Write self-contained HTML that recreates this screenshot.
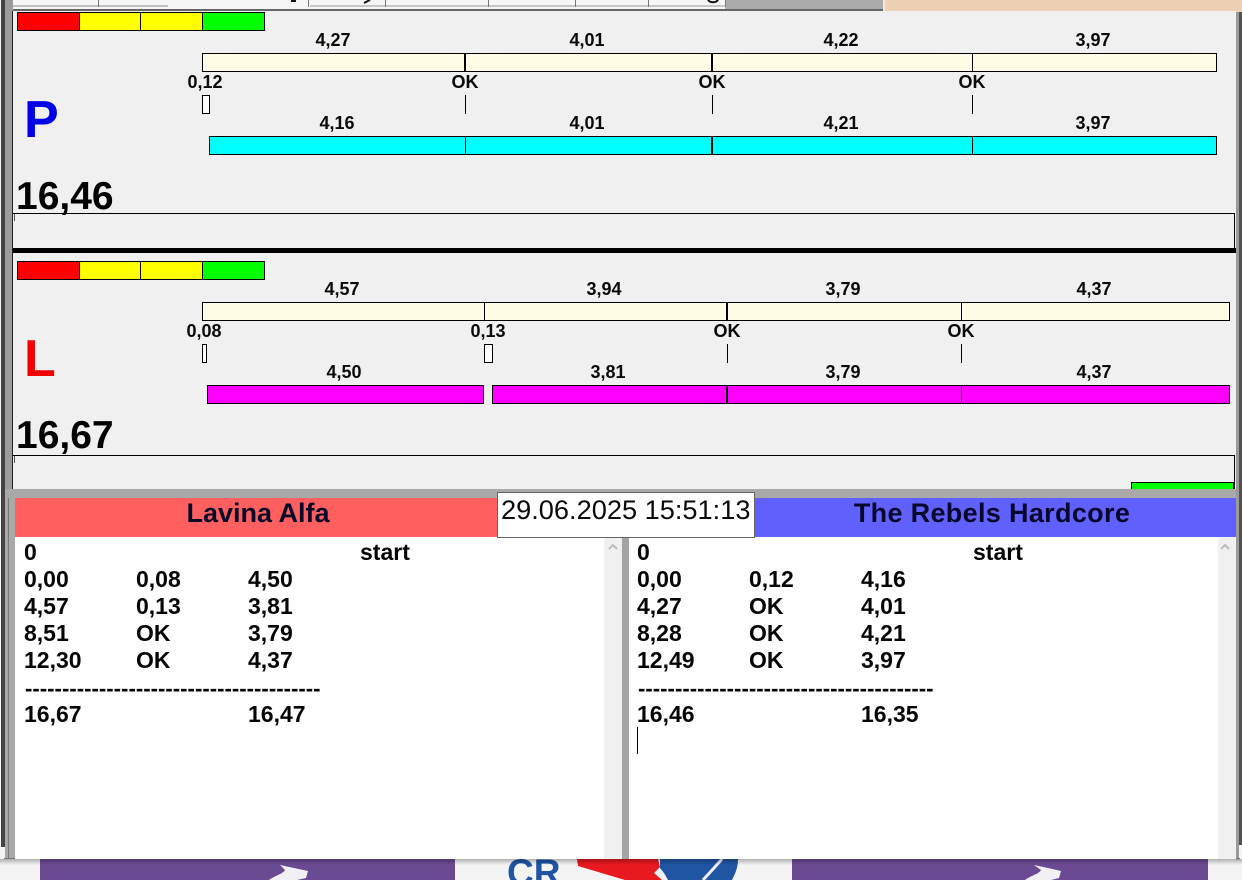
<!DOCTYPE html>
<html><head><meta charset="utf-8"><style>
html,body{margin:0;padding:0;width:1242px;height:880px;overflow:hidden;background:#f4f4f4}
body{position:relative;font-family:"Liberation Sans",sans-serif;color:#000}
div{position:absolute;box-sizing:border-box}
.t{font:bold 18px/20px "Liberation Sans",sans-serif;transform:translateX(-50%);white-space:nowrap;color:#0a0a0a}
.b{border:1px solid #000}
.k{background:#000;width:1px}
.k2{background:#000;width:2px}
.big{font:bold 39px/44px "Liberation Sans",sans-serif;white-space:nowrap;left:16px}
.r{font:bold 23px/26px "Liberation Sans",sans-serif;white-space:nowrap;color:#050505}
.d{font:bold 22.2px/26px "Liberation Sans",sans-serif;white-space:nowrap;color:#050505}
.hd{font:bold 27px/31px "Liberation Sans",sans-serif;text-align:center;top:498px;height:39px;color:#08082a}
</style></head><body>
<!-- backdrop -->
<div style="left:40px;top:859px;width:415px;height:21px;background:#6b4a94"></div>
<div style="left:792px;top:859px;width:416px;height:21px;background:#6b4a94"></div>
<svg style="position:absolute;left:0;top:859px" width="1242" height="21" viewBox="0 859 1242 21">
<path d="M269 880 C276 875 283 874 285 870 L280 865 L294 868 L308 871 L306 878 L297 880Z" fill="#f2f0f4"/>
<path d="M1025 880 C1032 875 1039 874 1041 870 L1034 865 L1048 868 L1061 871 L1059 878 L1051 880Z" fill="#f2f0f4"/>
<path d="M660 859 H738 C738 868 735 874 732 880 H668 L664 873 L660 868Z" fill="#1f55a3"/>
<path d="M577 859 H658 L660 867 L654 873 L662 880 H625 L578 866Z" fill="#e8191f"/>
<path d="M703 880 L714 868 L722 859" stroke="#eef" stroke-width="3" fill="none"/>
<text x="507" y="885" font-family="Liberation Sans" font-weight="bold" font-size="37" fill="#1f55a3">CR</text>
</svg>
<div style="left:0;top:859px;width:1242px;height:6px;background:linear-gradient(rgba(0,0,0,.28),rgba(0,0,0,0))"></div>
<!-- window frame -->
<div style="left:1px;top:0;width:4px;height:847px;background:#444"></div>
<div style="left:5px;top:0;width:8px;height:490px;background:#9c9c9c"></div>
<div style="left:5px;top:489px;width:10px;height:370px;background:#a9a9a9"></div>
<div style="left:8px;top:489px;width:1px;height:370px;background:#777"></div>
<div style="left:1236px;top:11px;width:3px;height:849px;background:#9a9a9a"></div>
<div style="left:1239px;top:11px;width:3px;height:834px;background:#55504c"></div>
<div style="left:4px;top:858px;width:1236px;height:1px;background:#777"></div>
<!-- tabs -->
<div style="left:13px;top:0;width:870px;height:9px;background:#f6f6f6"></div>
<div style="left:725px;top:0;width:158px;height:9px;background:#ababab"></div>
<div style="left:13px;top:5px;width:155px;height:2px;background:#c0c0c0"></div>
<div style="left:310px;top:5px;width:415px;height:2px;background:#c8c8c8"></div>
<div style="left:98px;top:0;width:1px;height:7px;background:#777"></div>
<div style="left:308px;top:0;width:1px;height:7px;background:#777"></div>
<div style="left:385px;top:0;width:1px;height:7px;background:#777"></div>
<div style="left:488px;top:0;width:1px;height:7px;background:#777"></div>
<div style="left:575px;top:0;width:1px;height:7px;background:#777"></div>
<div style="left:648px;top:0;width:1px;height:7px;background:#777"></div>
<div style="left:725px;top:0;width:1px;height:7px;background:#777"></div>
<svg style="position:absolute;left:0;top:0" width="760" height="6"><path d="M291 1 H296 M364 3 L370 0 M708 0 C710 3 716 3 718 0" stroke="#111" stroke-width="2" fill="none"/></svg>
<div style="left:13px;top:9px;width:870px;height:2px;background:#666"></div>
<div style="left:885px;top:0;width:357px;height:12px;background:#eed0b4"></div>
<!-- main panel -->
<div style="left:13px;top:11px;width:1223px;height:478px;background:#f0f0f0"></div>
<div style="left:12px;top:11px;width:1px;height:478px;background:#222"></div>
<div style="left:883px;top:0;width:2px;height:11px;background:#f0e8df"></div>

<!-- P panel -->
<div class="b" style="left:17px;top:12px;width:63px;height:19px;background:#f00"></div>
<div class="b" style="left:79px;top:12px;width:62px;height:19px;background:#ff0"></div>
<div class="b" style="left:140px;top:12px;width:63px;height:19px;background:#ff0"></div>
<div class="b" style="left:202px;top:12px;width:63px;height:19px;background:#0f0"></div>
<div class="t" style="left:333px;top:30px">4,27</div>
<div class="t" style="left:587px;top:30px">4,01</div>
<div class="t" style="left:841px;top:30px">4,22</div>
<div class="t" style="left:1093px;top:30px">3,97</div>
<div class="b" style="left:202px;top:53px;width:1015px;height:19px;background:#fffde6"></div>
<div class="k2" style="left:464px;top:53px;height:19px"></div>
<div class="k2" style="left:711px;top:53px;height:19px"></div>
<div class="k" style="left:972px;top:53px;height:19px"></div>
<div class="t" style="left:205px;top:72px">0,12</div>
<div class="t" style="left:465px;top:72px">OK</div>
<div class="t" style="left:712px;top:72px">OK</div>
<div class="t" style="left:972px;top:72px">OK</div>
<div class="b" style="left:202px;top:95px;width:8px;height:19px;background:#fff"></div>
<div class="k" style="left:465px;top:95px;height:19px"></div>
<div class="k" style="left:712px;top:95px;height:19px"></div>
<div class="k" style="left:972px;top:95px;height:19px"></div>
<div style="left:24px;top:90px;font:bold 52px/60px 'Liberation Sans',sans-serif;color:#0000e6">P</div>
<div class="t" style="left:337px;top:113px">4,16</div>
<div class="t" style="left:587px;top:113px">4,01</div>
<div class="t" style="left:841px;top:113px">4,21</div>
<div class="t" style="left:1093px;top:113px">3,97</div>
<div class="b" style="left:209px;top:136px;width:1008px;height:19px;background:#0ff"></div>
<div class="k" style="left:465px;top:136px;height:19px"></div>
<div class="k2" style="left:711px;top:136px;height:19px"></div>
<div class="k" style="left:972px;top:136px;height:19px"></div>
<div class="big" style="top:175px">16,46</div>
<div style="left:13px;top:213px;width:1222px;height:1px;background:#000"></div>
<div style="left:14px;top:214px;width:1px;height:7px;background:#555"></div>
<div style="left:1234px;top:213px;width:1px;height:36px;background:#000"></div>
<div style="left:13px;top:248px;width:1223px;height:5px;background:#000"></div>

<!-- L panel -->
<div class="b" style="left:17px;top:261px;width:63px;height:19px;background:#f00"></div>
<div class="b" style="left:79px;top:261px;width:62px;height:19px;background:#ff0"></div>
<div class="b" style="left:140px;top:261px;width:63px;height:19px;background:#ff0"></div>
<div class="b" style="left:202px;top:261px;width:63px;height:19px;background:#0f0"></div>
<div class="t" style="left:342px;top:279px">4,57</div>
<div class="t" style="left:604px;top:279px">3,94</div>
<div class="t" style="left:843px;top:279px">3,79</div>
<div class="t" style="left:1094px;top:279px">4,37</div>
<div class="b" style="left:202px;top:302px;width:1028px;height:19px;background:#fffde6"></div>
<div class="k" style="left:484px;top:302px;height:19px"></div>
<div class="k2" style="left:726px;top:302px;height:19px"></div>
<div class="k" style="left:961px;top:302px;height:19px"></div>
<div class="t" style="left:204px;top:321px">0,08</div>
<div class="t" style="left:488px;top:321px">0,13</div>
<div class="t" style="left:727px;top:321px">OK</div>
<div class="t" style="left:961px;top:321px">OK</div>
<div class="b" style="left:202px;top:344px;width:5px;height:19px;background:#fff"></div>
<div class="b" style="left:484px;top:344px;width:9px;height:19px;background:#fff"></div>
<div class="k" style="left:727px;top:344px;height:19px"></div>
<div class="k" style="left:961px;top:344px;height:19px"></div>
<div style="left:24px;top:329px;font:bold 52px/60px 'Liberation Sans',sans-serif;color:#f00000">L</div>
<div class="t" style="left:344px;top:362px">4,50</div>
<div class="t" style="left:608px;top:362px">3,81</div>
<div class="t" style="left:843px;top:362px">3,79</div>
<div class="t" style="left:1094px;top:362px">4,37</div>
<div class="b" style="left:207px;top:385px;width:277px;height:19px;background:#f0f"></div>
<div class="b" style="left:492px;top:385px;width:738px;height:19px;background:#f0f"></div>
<div class="k2" style="left:726px;top:385px;height:19px"></div>
<div class="k" style="left:961px;top:385px;height:19px"></div>
<div class="big" style="top:414px">16,67</div>
<div style="left:13px;top:455px;width:1222px;height:1px;background:#000"></div>
<div style="left:14px;top:456px;width:1px;height:7px;background:#555"></div>
<div style="left:1234px;top:455px;width:1px;height:34px;background:#000"></div>
<div class="b" style="left:1131px;top:482px;width:103px;height:7px;background:#0f0;border-bottom:0"></div>

<!-- splitter -->
<div style="left:5px;top:489px;width:1231px;height:9px;background:#a9a9a9"></div>
<!-- lists -->
<div style="left:15px;top:537px;width:589px;height:322px;background:#fff"></div>
<div style="left:604px;top:537px;width:18px;height:322px;background:#f0f0f0"></div>
<div style="left:622px;top:537px;width:7px;height:322px;background:#a3a3a3"></div>
<div style="left:629px;top:537px;width:589px;height:322px;background:#fff"></div>
<div style="left:1218px;top:537px;width:18px;height:322px;background:#f0f0f0"></div>
<svg style="position:absolute;left:607px;top:542px" width="12" height="10"><path d="M2 7 L6 3 L10 7" stroke="#bcbcbc" stroke-width="2" fill="none"/></svg>
<svg style="position:absolute;left:1219px;top:542px" width="12" height="10"><path d="M2 7 L6 3 L10 7" stroke="#bcbcbc" stroke-width="2" fill="none"/></svg>
<!-- headers -->
<div class="hd" style="left:15px;width:482px;background:#ff5f5f;padding-left:4px">Lavina Alfa</div>
<div class="hd" style="left:755px;width:481px;background:#6060ff;letter-spacing:.33px;padding-right:7px">The Rebels Hardcore</div>
<div style="left:497px;top:492px;width:258px;height:46px;background:#fff;border:1px solid #666;font:27.2px/34px 'Liberation Sans',sans-serif;padding-left:3px;white-space:nowrap;color:#0a0a0a">29.06.2025 15:51:13</div>

<!-- left list -->
<div class="r" style="left:24px;top:539px">0</div><div class="r" style="left:360px;top:539px">start</div>
<div class="r" style="left:24px;top:566px">0,00</div><div class="r" style="left:136px;top:566px">0,08</div><div class="r" style="left:248px;top:566px">4,50</div>
<div class="r" style="left:24px;top:593px">4,57</div><div class="r" style="left:136px;top:593px">0,13</div><div class="r" style="left:248px;top:593px">3,81</div>
<div class="r" style="left:24px;top:620px">8,51</div><div class="r" style="left:136px;top:620px">OK</div><div class="r" style="left:248px;top:620px">3,79</div>
<div class="r" style="left:24px;top:647px">12,30</div><div class="r" style="left:136px;top:647px">OK</div><div class="r" style="left:248px;top:647px">4,37</div>
<div class="d" style="left:25px;top:676px">----------------------------------------</div>
<div class="r" style="left:24px;top:701px">16,67</div><div class="r" style="left:248px;top:701px">16,47</div>
<!-- right list -->
<div class="r" style="left:637px;top:539px">0</div><div class="r" style="left:973px;top:539px">start</div>
<div class="r" style="left:637px;top:566px">0,00</div><div class="r" style="left:749px;top:566px">0,12</div><div class="r" style="left:861px;top:566px">4,16</div>
<div class="r" style="left:637px;top:593px">4,27</div><div class="r" style="left:749px;top:593px">OK</div><div class="r" style="left:861px;top:593px">4,01</div>
<div class="r" style="left:637px;top:620px">8,28</div><div class="r" style="left:749px;top:620px">OK</div><div class="r" style="left:861px;top:620px">4,21</div>
<div class="r" style="left:637px;top:647px">12,49</div><div class="r" style="left:749px;top:647px">OK</div><div class="r" style="left:861px;top:647px">3,97</div>
<div class="d" style="left:638px;top:676px">----------------------------------------</div>
<div class="r" style="left:637px;top:701px">16,46</div><div class="r" style="left:861px;top:701px">16,35</div>
<div style="left:637px;top:727px;width:1px;height:27px;background:#000"></div>
</body></html>
